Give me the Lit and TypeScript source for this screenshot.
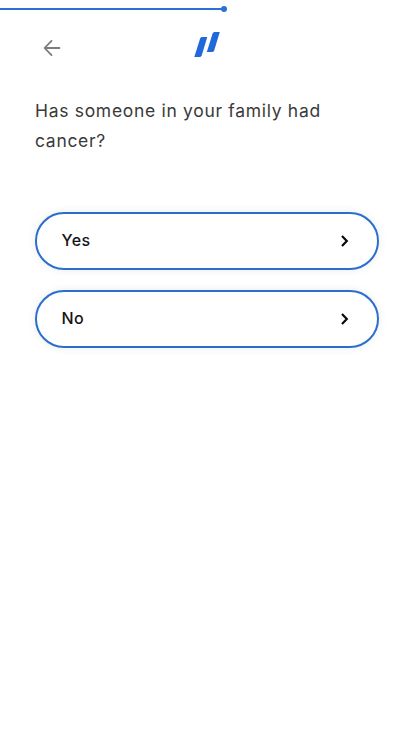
import { LitElement, html, css } from "lit";
import { customElement, property } from "lit/decorators.js";

@customElement("answer-option")
class AnswerOption extends LitElement {
  @property() label = "";

  static styles = css`
    :host { display: block; }
    .option {
      box-sizing: border-box;
      width: 100%;
      height: 58px;
      display: flex;
      align-items: center;
      justify-content: space-between;
      padding: 0 28px 2px 24.5px;
      border: 2px solid #2a6fcd;
      border-radius: 29px;
      background: #fff;
      box-shadow: 0 0 10px rgba(0, 0, 0, 0.08);
      font: 500 16px/24px Inter, sans-serif;
      letter-spacing: 0.4px;
      color: #151515;
      text-align: left;
    }
    .chevron { display: block; margin-top: 2px; }
  `;

  render() {
    return html`
      <button class="option">
        <span>${this.label}</span>
        <svg class="chevron" width="8" height="12" viewBox="0 0 8 12" fill="none" stroke="#0a0a0a" stroke-width="2.2">
          <path d="M1 1 5.800 6 1 11" />
        </svg>
      </button>
    `;
  }
}

@customElement("app-root")
class AppRoot extends LitElement {
  @property({ type: Number }) progress = 226.8 / 414;

  static styles = css`
    :host {
      display: block;
      min-height: 736px;
      background: #fff;
      font-family: Inter, sans-serif;
    }
    .track { height: 18px; display: flex; align-items: center; }
    .progress { display: flex; align-items: center; }
    .line { flex: 1; height: 2px; background: #2b70d2; }
    .dot { width: 6px; height: 6px; border-radius: 50%; background: #2b70d2; }
    .header {
      height: 60px;
      display: grid;
      grid-template-columns: 1fr auto 1fr;
      align-items: start;
      padding: 14px 43px 0;
      box-sizing: border-box;
    }
    .back { width: 18px; height: 18px; margin-top: 7px; padding: 0; border: 0; background: none; }
    .back svg, .logo { display: block; }
    .question {
      margin: 0;
      padding: 18px 35px 0;
      font-size: 17.5px;
      line-height: 30px;
      font-weight: 400;
      letter-spacing: 0.69px;
      color: #3a3a3a;
    }
    .answers { display: grid; gap: 20px; padding: 56px 35px 0; }
  `;

  render() {
    return html`
      <div class="track">
        <div class="progress" style="width: ${this.progress * 100}%">
          <div class="line"></div>
          <div class="dot"></div>
        </div>
      </div>
      <header class="header">
        <button class="back" aria-label="Back">
          <svg width="18" height="18" viewBox="0 0 18 18" fill="none" stroke="#7c7c7c" stroke-width="1.8" stroke-linecap="round">
            <path d="M16.5 9H2.2M8.5 1.900 1.700 9l6.800 7.100" />
          </svg>
        </button>
        <svg class="logo" width="26" height="26" viewBox="0 0 26 26" fill="#2069da">
          <path d="M7.900 5h5.400L7.700 23.600Q7.200 25 6 25H.3L6.100 6.500Q6.600 5 7.900 5z" />
          <path d="M20.400 0h5.400L20.200 18.600Q19.700 20 18.500 20H12.800L18.600 1.500Q19.100 0 20.400 0z" />
        </svg>
      </header>
      <h1 class="question">Has someone in your family had cancer?</h1>
      <div class="answers">
        <answer-option label="Yes"></answer-option>
        <answer-option label="No"></answer-option>
      </div>
    `;
  }
}
